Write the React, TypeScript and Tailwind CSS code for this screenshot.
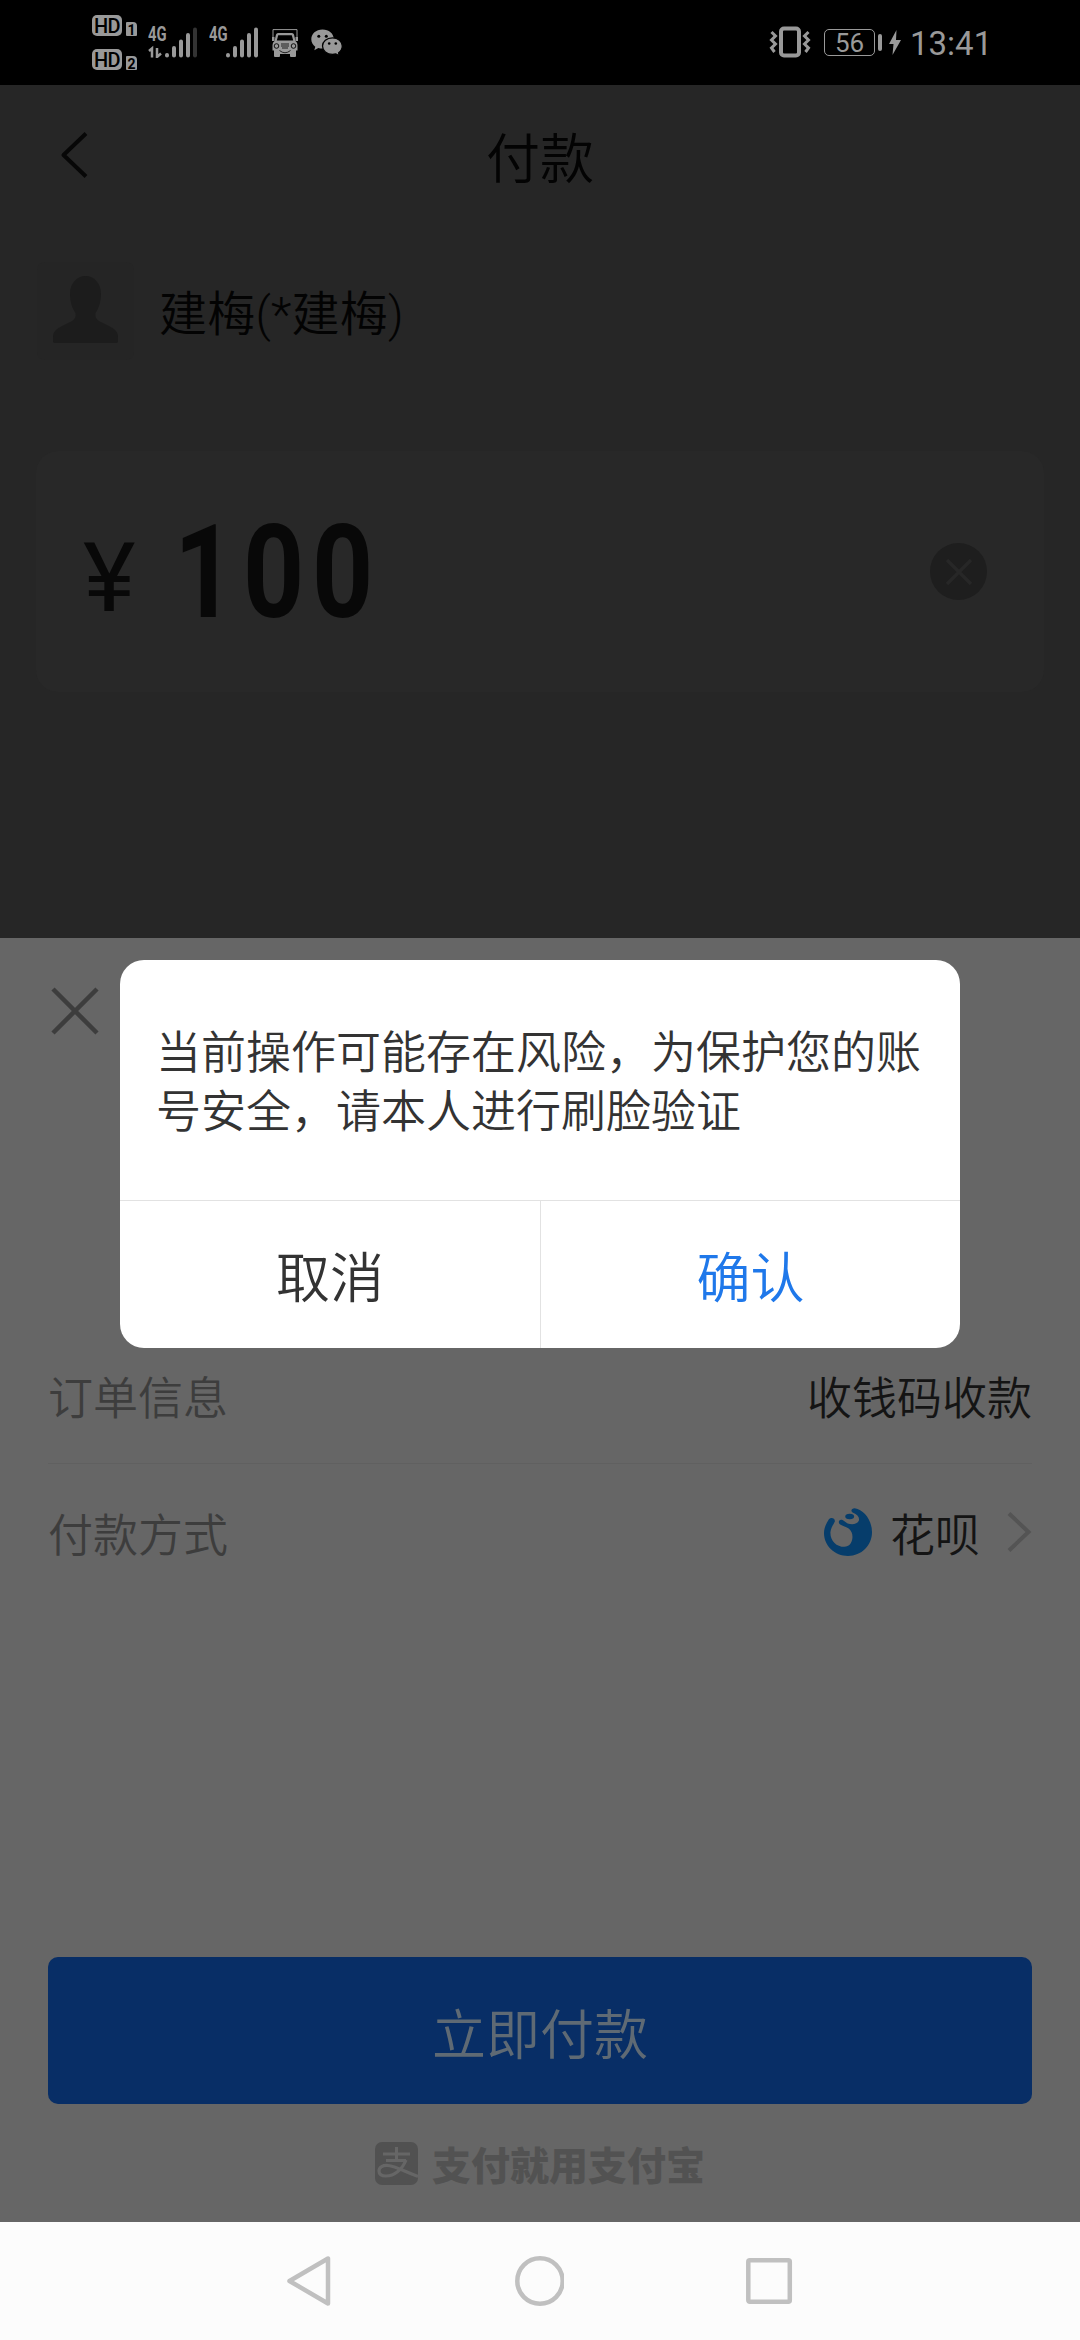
import React from "react";

const cjk = "font-['Noto_Sans_CJK_SC',sans-serif]";

function HdBadge({ sim }: { sim: string }) {
  return (
    <div className="flex h-[21px] items-end gap-1">
      <div className="flex h-[21px] w-[30px] items-center justify-center rounded-[5px] bg-[#999] font-['Roboto',sans-serif] text-[20px] leading-none font-medium tracking-[-0.5px] text-black">
        HD
      </div>
      <div className="flex h-[14px] w-[11px] items-center justify-center rounded-[1px] rounded-tr-[4px] bg-[#999] pt-px font-['Roboto',sans-serif] text-[14px] leading-none font-bold text-black">
        {sim}
      </div>
    </div>
  );
}

function Signal({ data, full }: { data?: boolean; full?: boolean }) {
  return (
    <div className="relative h-[31px] w-[50px]">
      <span className="absolute top-0 left-0 origin-left scale-x-[0.74] font-['Roboto',sans-serif] text-[20px] leading-[15px] font-bold text-[#999]">
        4G
      </span>
      <svg className="absolute inset-0" width="50" height="31" viewBox="0 0 50 31" fill="none" stroke="#999" strokeWidth="4" strokeLinecap="round">
        {data && <path d="M1 24l3-2.500v9M9 21v9l4-3.500" strokeWidth="2.500" strokeLinecap="butt" />}
        <path d="M19 28v.5M26 21v7.500M33 14.500v14M40 8v20.500" />
        <path d="M47 2.500v26" stroke={full ? "#999" : "#333"} />
      </svg>
    </div>
  );
}

function Truck() {
  return (
    <svg width="26" height="28" viewBox="0 0 26 28">
      <path d="M1 9V.6h24V9" fill="none" stroke="#999" strokeWidth="1" />
      <path fill="#999" fillRule="evenodd" d="M6 4h14q1.500 0 2 1.500L23.500 12q2 1.500 2 4v5.500H24V27q0 1-1 1h-4q-1 0-1-1v-2H8v2q0 1-1 1H3q-1 0-1-1v-5.500H.5V16q0-2.500 2-4L4 5.500Q4.500 4 6 4zm.2 2.200L4.800 11.500h16.400L19.800 6.200z" />
      <path fill="#999" d="M0 8h2.500v4H0zM23.500 8H26v4h-2.500z" />
      <circle cx="4.500" cy="17" r="2.300" fill="none" stroke="#000" strokeWidth=".9" />
      <circle cx="21.500" cy="17" r="2.300" fill="none" stroke="#000" strokeWidth=".9" />
      <path d="M9 15h8M9 17h8M10 19h6M7.500 21.500Q13 26 18.500 21.500" fill="none" stroke="#000" strokeWidth=".8" />
    </svg>
  );
}

function WeChat() {
  return (
    <svg width="32" height="28" viewBox="0 0 32 28">
      <path fill="#999" d="M11.500.5C5 .5.300 4.800.300 10.200c0 3.100 1.600 5.700 4 7.500L3.300 21.200l4-2.200c1.400.4 2.800.6 4.200.6C17.900 19.600 22.700 15.400 22.700 10S17.900.5 11.500.5z" />
      <path fill="#999" stroke="#000" strokeWidth="1.300" d="M21.500 8.800c-5.800 0-10 3.700-10 8.300s4.200 8.300 10 8.300c1.200 0 2.300-.2 3.300-.5l3.700 2-.9-3c2.300-1.600 3.700-4 3.700-6.800 0-4.600-4.200-8.300-9.800-8.300z" />
      <g fill="#000">
        <circle cx="7.800" cy="7.200" r="1.500" />
        <circle cx="15.300" cy="7.200" r="1.500" />
        <circle cx="18.200" cy="14.500" r="1.300" />
        <circle cx="24.800" cy="14.500" r="1.300" />
      </g>
    </svg>
  );
}

function StatusBar() {
  return (
    <header className="flex h-[85px] shrink-0 items-start bg-black pr-[87px] pl-[92px]">
      <div className="flex flex-col gap-[13px] pt-[15px]">
        <HdBadge sim="1" />
        <HdBadge sim="2" />
      </div>
      <div className="flex gap-[11px] pt-[27px] pl-[11px]">
        <Signal data />
        <Signal full />
      </div>
      <div className="flex gap-[13px] pt-[29px] pl-[13px]">
        <Truck />
        <WeChat />
      </div>
      <div className="ml-auto flex h-[85px] items-start">
        <svg className="mt-[26px]" width="42" height="32" viewBox="0 0 42 32" fill="none" stroke="#999">
          <rect x="12" y="2.500" width="18" height="27" rx="3" strokeWidth="4" />
          <path d="M2.500 6l4 4-4 4 4 4-4 4 3 4M39.500 6l-4 4 4 4-4 4 4 4-3 4" strokeWidth="3" />
        </svg>
        <div className="mt-[29px] ml-[13px] flex h-[27px] w-[51px] items-center justify-center rounded-[5px] border-[1.5px] border-[#999] font-['Roboto',sans-serif] text-[26px] leading-none text-[#999]">
          56
        </div>
        <div className="mt-[34px] ml-[3px] h-[17px] w-1 rounded-sm bg-[#999]" />
        <svg className="mt-[30px] ml-[7px]" width="12" height="25" viewBox="0 0 12 25">
          <path d="M7.500 0L0 14h4.500L3.500 25 12 10H7z" fill="#999" />
        </svg>
        <div className="mt-[27px] ml-[9px] w-[83px] font-['Roboto',sans-serif] text-[33px] leading-[34px] text-[#999]">13:41</div>
      </div>
    </header>
  );
}

function PaymentPage() {
  return (
    <main className={`h-[853px] shrink-0 bg-[#262626] text-[#030303] ${cjk}`}>
      <div className="grid h-[145px] grid-cols-3 items-center">
        <svg className="ml-[59px] -mt-[5px]" width="30" height="48" viewBox="0 0 30 48" fill="none" stroke="#070707" strokeWidth="4">
          <path d="M27 2.500L4.500 24 27 45.500" strokeLinejoin="round" />
        </svg>
        <h1 className="-mt-[4px] text-center text-[54px] leading-none font-[350]">付款</h1>
      </div>
      <div className="mt-[32px] flex h-[98px] items-center pl-[37px]">
        <div className="h-[98px] w-[97px] rounded-lg bg-[#252525] pt-[14px] pl-4">
          <svg width="65" height="67" viewBox="0 0 65 67" fill="#1c1c1c">
            <path d="M32.500 0C41 0 48 7 48 18c0 7-2 14-5.500 19-.7 4 .5 6 3.500 8l10 5c6 3 9 6 9 11v4c0 1.500-.5 2-2 2H2c-1.500 0-2-.5-2-2v-4c0-5 3-8 9-11l10-5c3-2 4.200-4 3.500-8C19 32 17 25 17 18 17 7 24 0 32.500 0z" />
          </svg>
        </div>
        <span className="mt-2 ml-[25px] font-['Roboto','Noto_Sans_CJK_SC',sans-serif] text-[48px] leading-none font-[350] tracking-[0.2px]">
          建梅(*建梅)
        </span>
      </div>
      <div className="mx-auto mt-[91px] flex h-[241px] w-[1008px] items-center rounded-[22px] bg-[#282828] pr-[57px] font-['Roboto',sans-serif] text-[#080808]">
        <span className="mt-[14px] ml-[47px] w-[55px] origin-left scale-x-[1.03] text-[97px] leading-none font-normal">¥</span>
        <span className="mt-[2px] ml-[36px] origin-left scale-x-[0.82] text-[130px] leading-none font-bold tracking-[9.5px]">100</span>
        <svg className="ml-auto" width="57" height="57" viewBox="0 0 57 57">
          <circle cx="28.500" cy="28.500" r="28.500" fill="#1e1e1e" />
          <path d="M17 17l24 24M41 17L17 41" stroke="#272727" strokeWidth="3.500" />
        </svg>
      </div>
    </main>
  );
}

function HuabeiLogo() {
  return (
    <svg width="48" height="48" viewBox="0 0 142 142" fill="#063d6b">
      <path d="M32 40C34 30 20 25 14 34 6 46 0 60 0 74c0 38 32 68 71 68 40 0 71-31 71-70C142 35 118 6 91 1 80 1 78 10 86 14c13 5 20 14 17 24-4 10-20 13-33 8-6-3-11-9-17-11-8-2-12 6-7 12 7 6 18 7 27 14 9 7 12 17 11 28-1 14-9 26-24 26C37 115 18 97 19 72c1-13 9-23 13-32z" />
      <ellipse cx="76" cy="25" rx="13" ry="8" />
    </svg>
  );
}

function PaymentSheet() {
  return (
    <section className={`flex h-[1284px] shrink-0 flex-col bg-[#666] px-12 font-[350] ${cjk}`}>
      <svg className="mt-[49px] ml-[3px] shrink-0" width="48" height="48" viewBox="0 0 48 48" stroke="#3d3d3d" strokeWidth="4.500">
        <path d="M2 2l44 44M46 2L2 46" />
      </svg>
      <div className="mt-[296px] flex h-[133px] items-center justify-between border-b border-[#606060] pb-[3px] text-[45px] leading-none">
        <span className="text-[#3d3d3d]">订单信息</span>
        <span className="text-[#141414]">收钱码收款</span>
      </div>
      <div className="flex h-[136px] items-center text-[45px] leading-none">
        <span className="text-[#3d3d3d]">付款方式</span>
        <div className="ml-auto flex items-center">
          <HuabeiLogo />
          <span className="ml-[18px] text-[#141414]">花呗</span>
          <svg className="ml-[26px]" width="26" height="40" viewBox="0 0 26 40" fill="none" stroke="#545454" strokeWidth="4">
            <path d="M3 1.500L22.500 20 3 38.500" />
          </svg>
        </div>
      </div>
      <button className="mt-[357px] h-[147px] shrink-0 rounded-[10px] bg-[#082e66] pt-[3px] text-[54px] leading-none text-[#5f6a74]">立即付款</button>
      <div className="mt-[38px] flex items-center justify-center gap-[14px]">
        <div className="flex size-[43px] items-center justify-center overflow-hidden rounded-[7px] bg-[#515151]">
          <svg width="43" height="43" viewBox="0 0 43 43" fill="none" stroke="#666">
            <path d="M21.500 5v13M8 12h27M11 18.500h20" strokeWidth="3" />
            <path d="M31 18C27 28 19 34 11 34c-5 0-7-2-7-5 0-4 4-6 9-5.500 8 .8 16 6 30 11" strokeWidth="3.200" />
          </svg>
        </div>
        <span className="text-[39px] leading-none font-black text-[#525252]">支付就用支付宝</span>
      </div>
    </section>
  );
}

function ConfirmDialog() {
  return (
    <div className="absolute inset-x-0 top-[85px] bottom-[118px] flex items-center justify-center">
      <div role="dialog" className={`flex h-[388px] w-[840px] flex-col overflow-hidden rounded-3xl bg-white font-[350] text-[#333] ${cjk}`}>
        <p className="h-[240px] pt-[60px] pl-9 text-[45px] leading-[59px]">
          当前操作可能存在风险，为保护您的账
          <br />
          号安全，请本人进行刷脸验证
        </p>
        <div className="grid flex-1 grid-cols-2 border-t border-[#e2e2e2] text-[54px] leading-none">
          <button className="pt-px">取消</button>
          <button className="border-l border-[#e2e2e2] pt-px text-[#1f78ea]">确认</button>
        </div>
      </div>
    </div>
  );
}

function NavBar() {
  return (
    <nav className="flex h-[118px] shrink-0 items-center justify-between bg-[#fcfcfc] px-[285px]">
      <svg width="48" height="52" viewBox="0 0 48 52" fill="none" stroke="#c0c0c0" strokeWidth="4.500" strokeLinejoin="round">
        <path d="M43 3.500v45L4.500 26z" />
      </svg>
      <svg width="50" height="50" viewBox="0 0 50 50" fill="none" stroke="#c0c0c0" strokeWidth="4.500">
        <circle cx="26" cy="25" r="22.700" />
      </svg>
      <svg width="50" height="50" viewBox="0 0 50 50" fill="none" stroke="#c0c0c0" strokeWidth="4.500">
        <rect x="3.300" y="4.300" width="41.500" height="41.500" rx="1.500" />
      </svg>
    </nav>
  );
}

export default function App() {
  return (
    <div className="relative flex h-[2340px] w-[1080px] flex-col overflow-hidden bg-black">
      <StatusBar />
      <PaymentPage />
      <PaymentSheet />
      <NavBar />
      <ConfirmDialog />
    </div>
  );
}
